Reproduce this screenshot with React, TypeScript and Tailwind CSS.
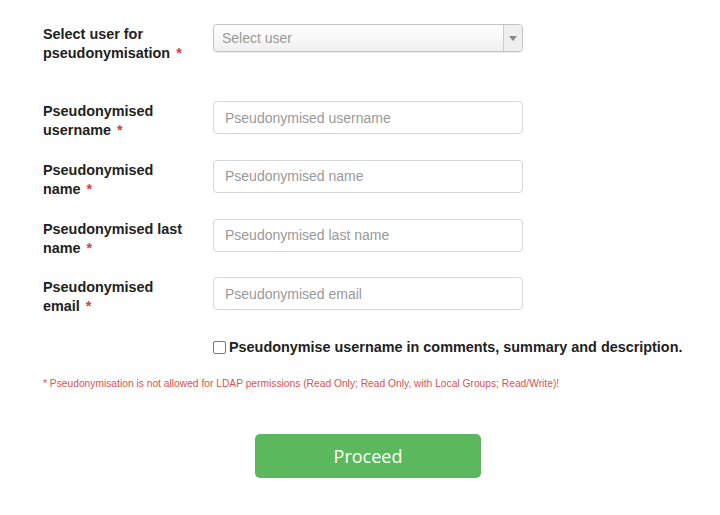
import React from "react";

const labelCls =
  "w-[170px] shrink-0 pr-[16px] pt-[1px] text-[14.4px] leading-[19px] font-bold text-[#222]";

function Req() {
  return <span className="ml-[6px] text-[#c44]">*</span>;
}

function TextRow({ label, last, placeholder }: { label: string; last: string; placeholder: string }) {
  return (
    <div className="flex items-start">
      <div className={labelCls}>
        {label}
        <br />
        {last}
        <Req />
      </div>
      <input
        type="text"
        placeholder={placeholder}
        className="h-[33px] w-[310px] rounded-[4px] border border-[#d6d6d6] bg-white px-[11px] text-[14px] text-[#555] placeholder:text-[#999] outline-none"
      />
    </div>
  );
}

export default function App() {
  return (
    <div
      className="min-h-[515px] w-[720px] bg-white pl-[43px] pt-[24px]"
      style={{ fontFamily: '"Liberation Sans", Arial, sans-serif' }}
    >
      {/* select user */}
      <div className="flex items-start">
        <div className={labelCls}>
          Select user for
          <br />
          pseudonymisation
          <Req />
        </div>
        <div className="flex h-[28px] w-[310px] items-stretch overflow-hidden rounded-[4px] border border-[#c4c4c4] bg-gradient-to-b from-white to-[#f0f0f0] shadow-[0_1px_1px_rgba(0,0,0,0.08)]">
          <div className="flex flex-1 items-center pl-[8px] pt-[1px] text-[14px] text-[#999]">Select user</div>
          <div className="flex w-[19px] items-center justify-center border-l border-[#ccc] bg-[#efefef]">
            <svg width="8" height="5" viewBox="0 0 8 5">
              <path d="M0 0h8L4 5z" fill="#888" />
            </svg>
          </div>
        </div>
      </div>

      <div className="mt-[38px] flex flex-col gap-[19.8px]">
        <TextRow label="Pseudonymised" last="username" placeholder="Pseudonymised username" />
        <TextRow label="Pseudonymised" last="name" placeholder="Pseudonymised name" />
        <TextRow label="Pseudonymised last" last="name" placeholder="Pseudonymised last name" />
        <TextRow label="Pseudonymised" last="email" placeholder="Pseudonymised email" />
      </div>

      <label className="ml-[170px] mt-[21.5px] flex items-center gap-[3px] text-[14.4px] leading-[19px] font-bold text-[#222]">
        <input
          type="checkbox"
          className="mt-[1px] h-[13px] w-[13px] appearance-none rounded-[2px] border border-[#777] bg-white"
        />
        Pseudonymise username in comments, summary and description.
      </label>

      <p className="mt-[20.5px] text-[10.25px] leading-[14px] text-[#e05050]">
        * Pseudonymisation is not allowed for LDAP permissions (Read Only; Read Only, with Local Groups; Read/Write)!
      </p>

      <button
        type="button"
        className="ml-[212px] mt-[43px] h-[44px] w-[226px] rounded-[5px] bg-[#5cb85c] text-[18px] text-white"
        style={{ fontFamily: '"Open Sans", "Liberation Sans", sans-serif' }}
      >
        Proceed
      </button>
    </div>
  );
}
